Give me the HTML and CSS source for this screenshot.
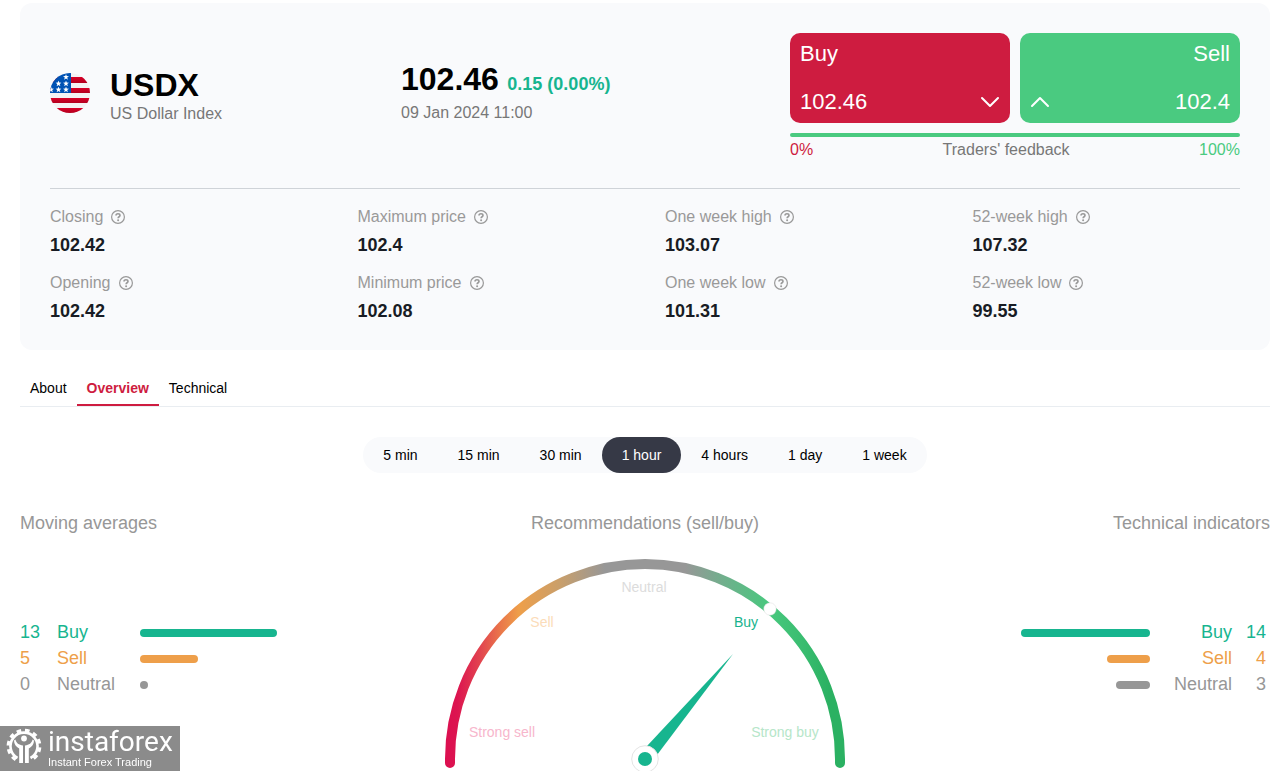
FILE: index.html
```html
<!DOCTYPE html>
<html lang="en">
<head>
<meta charset="utf-8">
<title>USDX – US Dollar Index</title>
<link rel="stylesheet" href="styles.css">
</head>
<body>
<svg class="defs" aria-hidden="true">
  <symbol id="help" viewBox="0 0 14 14">
    <circle cx="7" cy="7" r="6.4" fill="none" stroke="currentColor" stroke-width="1.2"/>
    <path d="M5 5.5C5 3.1 9 3.2 9 5.4C9 6.8 7.1 6.7 7.1 8.2" fill="none" stroke="currentColor" stroke-width="1.6"/>
    <circle cx="7.1" cy="10.2" r="1" fill="currentColor"/>
  </symbol>
  <symbol id="star" viewBox="0 0 10 10">
    <path d="M5 0L6.2 3.5L10 3.6L7 5.9L8.1 9.5L5 7.3L1.9 9.5L3 5.9L0 3.6L3.8 3.5Z" fill="#fff"/>
  </symbol>
</svg>
<main class="page">
  <section class="card">
    <header class="summary">
      <div class="instrument">
        <svg class="flag" viewBox="0 0 40 40" aria-hidden="true">
          <defs>
            <clipPath id="round"><circle cx="20" cy="20" r="20"/></clipPath>
            <linearGradient id="stripe" x2="0" y2="1"><stop stop-color="#d80027"/><stop offset="1" stop-color="#b3001f"/></linearGradient>
          </defs>
          <g clip-path="url(#round)">
            <rect width="40" height="40" fill="#f4f2f3"/>
            <rect y="4" width="40" height="6" fill="url(#stripe)"/>
            <rect y="15" width="40" height="5" fill="url(#stripe)"/>
            <rect y="25" width="40" height="5" fill="url(#stripe)"/>
            <rect y="35" width="40" height="5" fill="url(#stripe)"/>
            <rect width="21" height="20" fill="#0052b4"/>
            <use href="#star" x="13" y="1" width="6" height="6"/>
            <use href="#star" x="5.5" y="7.5" width="6" height="6"/>
            <use href="#star" x="13" y="7.5" width="6" height="6"/>
            <use href="#star" x="-2" y="13.5" width="6" height="6"/>
            <use href="#star" x="5.5" y="13.5" width="6" height="6"/>
            <use href="#star" x="13" y="13.5" width="6" height="6"/>
          </g>
        </svg>
        <div class="names">
          <h1 class="symbol">USDX</h1>
          <p class="muted">US Dollar Index</p>
        </div>
      </div>
      <div class="quote">
        <p class="quote-line"><strong class="price">102.46</strong> <span class="change">0.15 (0.00%)</span></p>
        <p class="muted">09 Jan 2024 11:00</p>
      </div>
      <div class="trade">
        <div class="trade-buttons">
          <button class="deal deal-buy" type="button">
            <span>Buy</span>
            <span class="deal-row"><span>102.46</span>
              <svg class="chevron" viewBox="0 0 20 12" aria-hidden="true"><path d="M2 2L10 10L18 2"/></svg></span>
          </button>
          <button class="deal deal-sell" type="button">
            <span>Sell</span>
            <span class="deal-row"><svg class="chevron" viewBox="0 0 20 12" aria-hidden="true"><path d="M2 10L10 2L18 10"/></svg>
              <span>102.4</span></span>
          </button>
        </div>
        <div class="feedback-bar"></div>
        <div class="feedback"><span class="red">0%</span><span>Traders' feedback</span><span class="lime">100%</span></div>
      </div>
    </header>
    <dl class="stats">
      <div><dt>Closing <svg class="help"><use href="#help"/></svg></dt><dd>102.42</dd></div>
      <div><dt>Maximum price <svg class="help"><use href="#help"/></svg></dt><dd>102.4</dd></div>
      <div><dt>One week high <svg class="help"><use href="#help"/></svg></dt><dd>103.07</dd></div>
      <div><dt>52-week high <svg class="help"><use href="#help"/></svg></dt><dd>107.32</dd></div>
      <div><dt>Opening <svg class="help"><use href="#help"/></svg></dt><dd>102.42</dd></div>
      <div><dt>Minimum price <svg class="help"><use href="#help"/></svg></dt><dd>102.08</dd></div>
      <div><dt>One week low <svg class="help"><use href="#help"/></svg></dt><dd>101.31</dd></div>
      <div><dt>52-week low <svg class="help"><use href="#help"/></svg></dt><dd>99.55</dd></div>
    </dl>
  </section>

  <nav class="tabs">
    <a class="tab" href="#about">About</a>
    <a class="tab tab-active" href="#overview">Overview</a>
    <a class="tab" href="#technical">Technical</a>
  </nav>

  <div class="periods">
    <button class="period" type="button">5 min</button>
    <button class="period" type="button">15 min</button>
    <button class="period" type="button">30 min</button>
    <button class="period period-active" type="button">1 hour</button>
    <button class="period" type="button">4 hours</button>
    <button class="period" type="button">1 day</button>
    <button class="period" type="button">1 week</button>
  </div>

  <div class="signals">
    <section class="panel">
      <h2 class="panel-title">Moving averages</h2>
      <ul class="votes">
        <li class="vote teal"><span>13</span><span>Buy</span><i class="bar" style="width:137px"></i></li>
        <li class="vote orange"><span>5</span><span>Sell</span><i class="bar" style="width:58px"></i></li>
        <li class="vote gray"><span>0</span><span>Neutral</span><i class="bar" style="width:8px"></i></li>
      </ul>
    </section>
    <section class="panel panel-center">
      <h2 class="panel-title">Recommendations (sell/buy)</h2>
      <svg class="gauge" viewBox="0 0 400 212" role="img" aria-label="Recommendation: Buy">
        <defs>
          <linearGradient id="scale" gradientUnits="userSpaceOnUse" x1="0" y1="0" x2="400" y2="0">
            <stop offset="0" stop-color="#dc0f50"/>
            <stop offset=".03" stop-color="#dc1450"/>
            <stop offset=".09" stop-color="#e2464f"/>
            <stop offset=".14" stop-color="#ea784a"/>
            <stop offset=".185" stop-color="#ee9f4a"/>
            <stop offset=".29" stop-color="#c89f6c"/>
            <stop offset=".4" stop-color="#979797"/>
            <stop offset=".6" stop-color="#979797"/>
            <stop offset=".7" stop-color="#6fb08c"/>
            <stop offset=".81" stop-color="#48c87e"/>
            <stop offset=".9" stop-color="#38bc6f"/>
            <stop offset=".96" stop-color="#2bb162"/>
            <stop offset="1" stop-color="#2bb162"/>
          </linearGradient>
        </defs>
        <path d="M5 204V200A195 195 0 0 1 395 200V204" fill="none" stroke="url(#scale)" stroke-width="10" stroke-linecap="round"/>
        <circle cx="325" cy="50" r="6.2" fill="#fff" stroke="#ddd" stroke-width=".5"/>
        <g class="gauge-labels">
          <text x="57" y="178" text-anchor="middle" fill="#f7b6cc">Strong sell</text>
          <text x="97" y="68" text-anchor="middle" fill="#fbdcb9">Sell</text>
          <text x="199" y="33" text-anchor="middle" fill="#dcdcdc">Neutral</text>
          <text x="301" y="68" text-anchor="middle" fill="#17b38d">Buy</text>
          <text x="340" y="178" text-anchor="middle" fill="#b6e6c9">Strong buy</text>
        </g>
        <path d="M288 95L202 187L212 196Z" fill="#17b58f"/>
        <circle cx="200" cy="200" r="13.3" fill="#fff" stroke="#e4e4e4"/>
        <circle cx="200" cy="200" r="7" fill="#17b58f"/>
      </svg>
    </section>
    <section class="panel panel-right">
      <h2 class="panel-title">Technical indicators</h2>
      <ul class="votes">
        <li class="vote teal"><i class="bar" style="width:129px"></i><span>Buy</span><span>14</span></li>
        <li class="vote orange"><i class="bar" style="width:43px"></i><span>Sell</span><span>4</span></li>
        <li class="vote gray"><i class="bar" style="width:34px"></i><span>Neutral</span><span>3</span></li>
      </ul>
    </section>
  </div>
</main>
<aside class="brand">
  <svg class="brand-mark" viewBox="0 0 36 36" aria-hidden="true">
    <path d="M11.500 30A13.500 13.500 0 1 1 24.500 30" fill="none" stroke="#fff" stroke-width="2.6"/>
    <path d="M9.700 31.600A15.800 15.800 0 1 1 26.300 31.600" fill="none" stroke="#fff" stroke-width="3.200" stroke-dasharray="4.600 3.700"/>
    <circle cx="18" cy="10.500" r="2.900" fill="#fff"/>
    <path d="M9.500 11.500C10 15 13 17 17 17.500V35H13.200V20.500C10 19 8 16 8 12.500ZM26.500 11.500C26 15 23 17 19 17.500V35H22.800V20.500C26 19 28 16 28 12.500Z" fill="#fff"/>
  </svg>
  <div class="brand-text">
    <div class="brand-name">instaforex</div>
    <div class="brand-tag">Instant Forex Trading</div>
  </div>
</aside>
</body>
</html>
```
FILE: styles.css
```css
* { box-sizing: border-box; }
body {
  margin: 0;
  background: #fff;
  color: #000;
  font: 16px/24px "Liberation Sans", Arial, sans-serif;
}
h1, h2, p, dl, dd, ul { margin: 0; padding: 0; }
button { font-family: inherit; border: 0; cursor: pointer; }
.defs { position: absolute; width: 0; height: 0; }
.page { padding: 3px 12px 0 20px; }

.card { padding: 30px 30px 27px; border-radius: 12px; background: #f9fafc; }
.summary {
  display: grid;
  grid-template-columns: 1fr 389px 450px;
  padding-bottom: 26px;
  border-bottom: 1px solid #cfd3d8;
}
.instrument { display: flex; align-items: center; gap: 20px; padding-bottom: 10px; }
.flag { width: 40px; height: 40px; }
.names { padding-top: 8px; }
.symbol { font-size: 32px; line-height: 34px; }
.muted { color: #777; }
.quote { padding-top: 30px; }
.quote-line { line-height: 32px; }
.price { font-size: 32px; }
.change { margin-left: 4px; color: #17b58f; font-size: 18px; font-weight: bold; }

.trade-buttons { display: grid; grid-template-columns: 1fr 1fr; gap: 10px; }
.deal {
  display: flex;
  flex-direction: column;
  justify-content: space-between;
  height: 90px;
  padding: 8px 10px;
  border-radius: 10px;
  color: #fff;
  font-size: 22px;
  line-height: 26px;
  text-align: left;
}
.deal-buy { background: #ce1c40; }
.deal-sell { background: #4aca80; align-items: flex-end; }
.deal-row { display: flex; justify-content: space-between; align-items: center; width: 100%; }
.chevron { width: 20px; height: 12px; fill: none; stroke: #fff; stroke-width: 2; stroke-linecap: round; stroke-linejoin: round; }
.feedback-bar { height: 4px; margin-top: 10px; border-radius: 2px; background: #4aca80; }
.feedback { display: flex; justify-content: space-between; padding-top: 1px; color: #777; }
.red { color: #ce1c40; }
.lime { color: #4aca80; }

.stats { display: grid; grid-template-columns: repeat(4, 1fr); gap: 14px 40px; padding-top: 16px; }
.stats dt { display: flex; align-items: center; gap: 8px; color: #999; }
.stats dd { margin-top: 4px; color: #181c24; font-size: 18px; font-weight: bold; }
.help { width: 14px; height: 14px; }

.tabs { display: flex; margin-top: 20px; border-bottom: 1px solid #e9edf1; }
.tab {
  padding: 8px 10px 6px;
  border-bottom: 2px solid transparent;
  color: #000;
  font-size: 14px;
  line-height: 20px;
  text-decoration: none;
}
.tab-active { border-color: #ce1c40; color: #ce1c40; font-weight: bold; }

.periods { display: flex; width: fit-content; margin: 30px auto 0; border-radius: 18px; background: #f9fafc; }
.period { padding: 8px 20px; border-radius: 18px; background: none; color: #000; font-size: 14px; line-height: 20px; }
.period-active { background: #363946; color: #fff; }

.signals { display: grid; grid-template-columns: 1fr 400px 1fr; margin-top: 38px; }
.panel-title { color: #979797; font-size: 18px; font-weight: normal; line-height: 24px; }
.panel-center { text-align: center; }
.panel-right { text-align: right; }
.votes { margin-top: 84px; list-style: none; font-size: 18px; line-height: 26px; }
.vote { display: grid; grid-template-columns: 37px 83px 1fr; align-items: center; }
.panel-right .votes { padding-right: 4px; }
.panel-right .vote { grid-template-columns: 1fr 82px 34px; }
.panel-right .bar { justify-self: end; }
.bar { height: 8px; margin-top: 2px; border-radius: 4px; background: currentColor; }
.teal { color: #17b58f; }
.orange { color: #ee9f4a; }
.gray { color: #979797; }
.gauge { display: block; width: 100%; margin-top: 24px; }
.gauge-labels { font-size: 14px; }

.brand {
  position: fixed;
  left: 0;
  bottom: 0;
  display: flex;
  gap: 6px;
  width: 180px;
  height: 45px;
  padding: 2px 6px;
  background: #8b8b8b;
  color: #fff;
}
.brand-mark { width: 36px; height: 36px; flex: none; }
.brand-name { font: 28px/28px Roboto, sans-serif; }
.brand-tag { font-size: 11px; line-height: 13px; }
```
